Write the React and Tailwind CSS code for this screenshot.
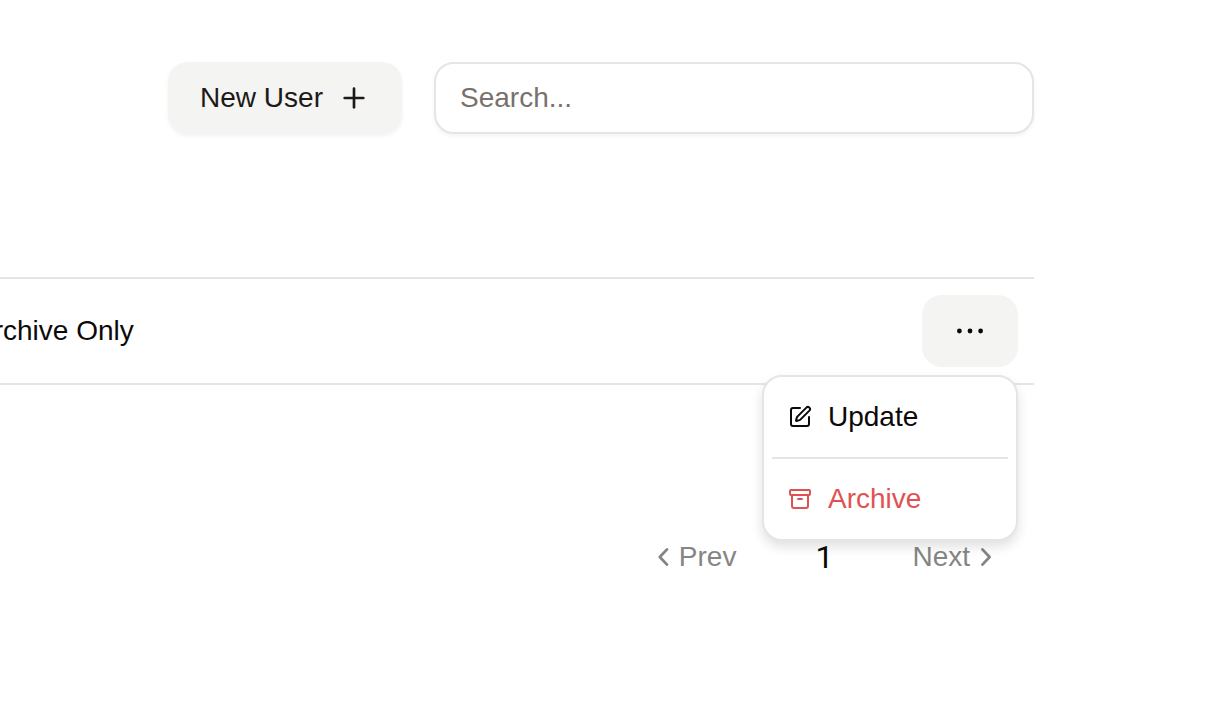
import { Archive, Plus, SquarePen } from "lucide-react";

function Dots() {
  return (
    <svg width="32" height="32" viewBox="0 0 32 32" fill="currentColor" aria-hidden="true">
      <circle cx="5.4" cy="16" r="2.4" />
      <circle cx="16" cy="16" r="2.4" />
      <circle cx="26.6" cy="16" r="2.4" />
    </svg>
  );
}

function Chevron({ d }) {
  return (
    <svg
      width="12"
      height="20"
      viewBox="0 0 12 20"
      fill="none"
      stroke="currentColor"
      strokeWidth="2.8"
      strokeLinecap="round"
      strokeLinejoin="round"
      aria-hidden="true"
    >
      <path d={d} />
    </svg>
  );
}

function RowMenu() {
  return (
    <div
      role="menu"
      aria-label="User actions"
      className="absolute top-full right-0 z-10 mt-2 w-64 rounded-[20px] border-2 border-[#e5e5e5] bg-white p-2 shadow-[0_6px_12px_rgba(0,0,0,0.12)]"
    >
      <button type="button" role="menuitem" className="flex h-16 w-full items-center gap-4 px-4 text-left">
        <SquarePen size={24} strokeWidth={2} />
        Update
      </button>
      <div role="separator" className="my-2 h-0.5 bg-[#e5e5e5]" />
      <button
        type="button"
        role="menuitem"
        className="flex h-16 w-full items-center gap-4 px-4 text-left text-[#e05252]"
      >
        <Archive size={24} strokeWidth={2} />
        Archive
      </button>
    </div>
  );
}

export default function App() {
  return (
    <main className="min-h-screen overflow-hidden bg-white pt-[62px] pr-[182px] font-['Liberation_Sans',Arial,sans-serif] text-[28px] leading-8 text-[#0c0a09]">
      <div className="flex items-center justify-end gap-8">
        <button
          type="button"
          className="flex h-[72px] shrink-0 items-center gap-[15px] rounded-[20px] bg-[#f4f4f2] px-8 text-[#1c1917] shadow-[0_2px_4px_rgba(0,0,0,0.05)]"
        >
          New User
          <Plus size={32} strokeWidth={2} />
        </button>
        <input
          type="search"
          aria-label="Search users"
          placeholder="Search..."
          className="h-[72px] w-[600px] min-w-0 rounded-[20px] border-2 border-[#e5e5e5] bg-white px-6 shadow-[0_2px_4px_rgba(0,0,0,0.05)] placeholder:text-[#78716c]"
        />
      </div>

      <table className="mt-[143px] w-full border-separate border-spacing-0">
        <tbody>
          <tr>
            <td className="border-y-2 border-[#e5e5e5] py-4">
              <span className="-ml-[25px]">Archive Only</span>
            </td>
            <td className="border-y-2 border-[#e5e5e5] py-4 pr-4">
              <div className="relative ml-auto w-24">
                <button
                  type="button"
                  aria-label="Open actions"
                  aria-haspopup="menu"
                  aria-expanded="true"
                  className="flex h-[72px] w-24 items-center justify-center rounded-[20px] bg-[#f4f4f2]"
                >
                  <Dots />
                </button>
                <RowMenu />
              </div>
            </td>
          </tr>
        </tbody>
      </table>

      <nav aria-label="Pagination" className="mt-[156px] flex items-center justify-end gap-[79px] pr-[42px] text-[#858585]">
        <button type="button" className="flex items-center gap-[10px]">
          <Chevron d="M10 2.400L2.800 10l7.200 7.600" />
          Prev
        </button>
        <span aria-current="page" className="font-[Roboto,sans-serif] text-[32px] text-[#0c0a09]">
          1
        </span>
        <button type="button" className="flex items-center gap-[10px]">
          Next
          <Chevron d="M2.400 2.400l7.200 7.600-7.200 7.600" />
        </button>
      </nav>
    </main>
  );
}
